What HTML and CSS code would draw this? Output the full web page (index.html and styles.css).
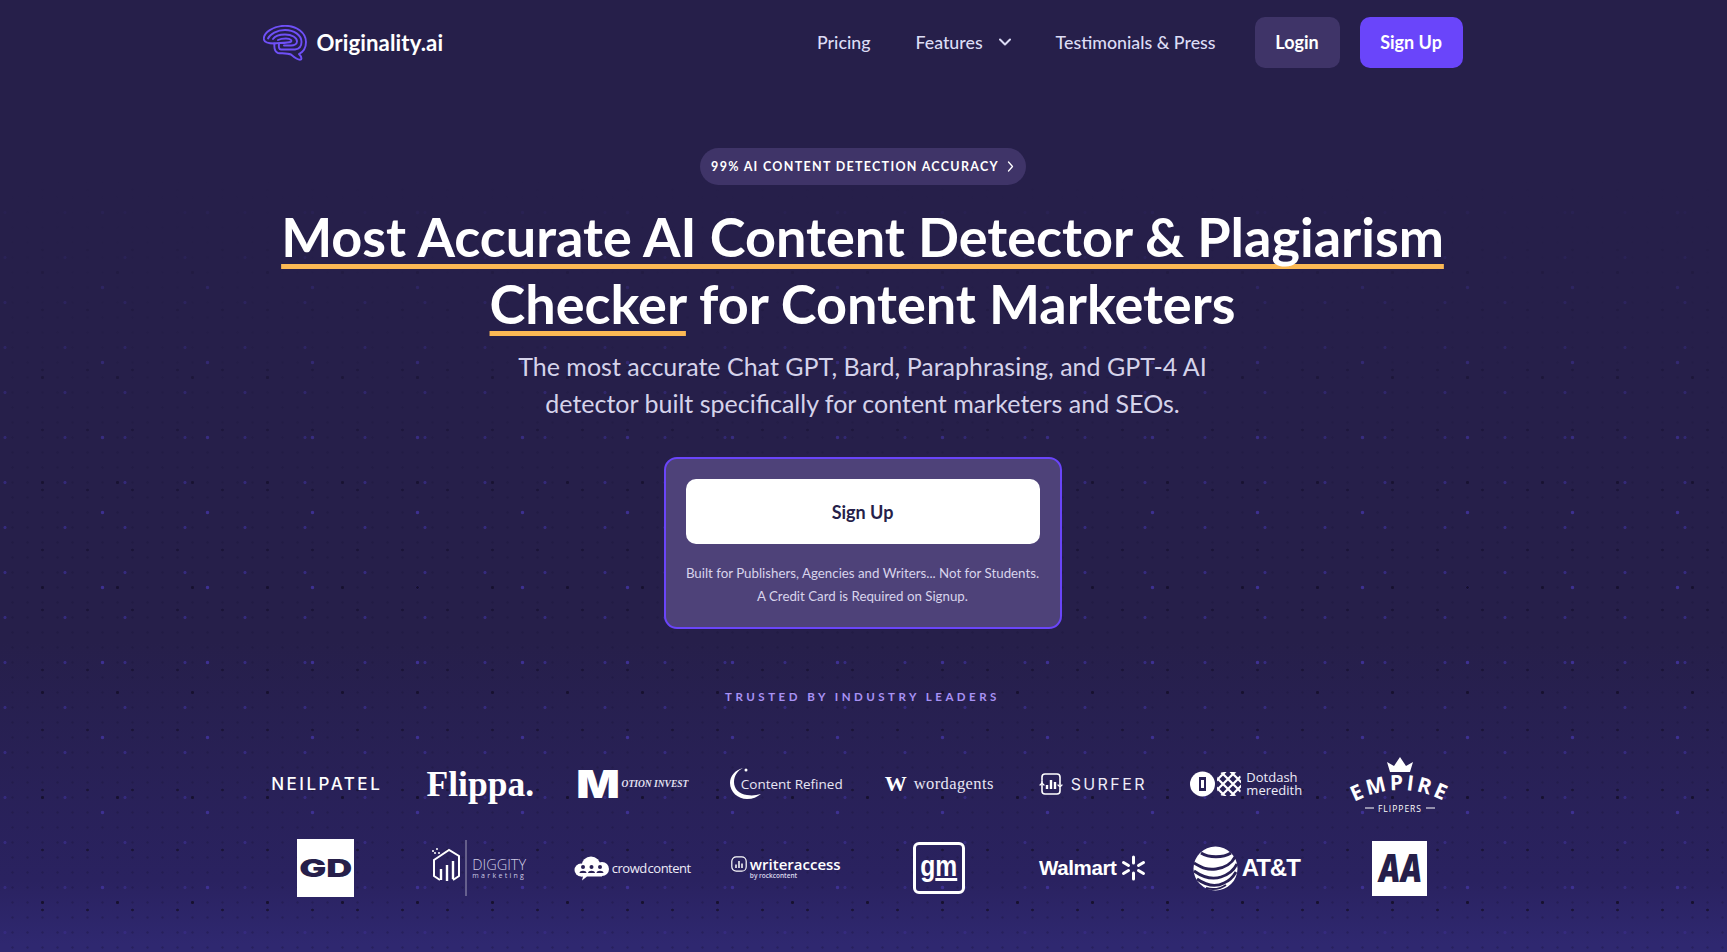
FILE: index.html
```html
<!DOCTYPE html>
<html lang="en">
<head>
    <meta charset="UTF-8">
    <meta name="viewport" content="width=device-width, initial-scale=1.0">
    <title>Originality.ai</title>
    <link rel="stylesheet" href="styles.css">
</head>
<body>
<header class="nav">
    <a class="brand" href="#">
        <svg class="brand-icon" width="44" height="36" viewBox="0 0 44 36" fill="none" stroke="#6f50f8" stroke-width="1.900" stroke-linecap="round" stroke-linejoin="round">
            <path d="M36 29C38 31 39 33 38 34.500C36 35.500 32 33 28 29.500C24 28 19 28.500 15 28C12 27 11 23 11.500 18.500C7 18.500 1 18 .8 14C.5 8 10 .8 22 .8C34 .8 43 8 43 17C43 23 40 27 36 29Z"/>
            <path d="M5 13.500C7 9 14 5 22 5C31 5 38.500 10 38.500 17C38.500 21 36 24 32 24.500L18 24.500C16 24.500 15.500 22 16 19"/>
            <path d="M10 14C12 11 17 9.500 22 9.500C29 9.500 34 12.500 34 16.500C34 19 31 20.500 28 20.500L21 20.500"/>
            <path d="M11 18.500C14 18 25 18 27.500 17C29.500 16 28 13.500 23 13.500C20 13.500 17 14 15 15"/>
        </svg>
        <span class="brand-name">Originality.ai</span>
    </a>
    <nav class="nav-links">
        <a href="#">Pricing</a>
        <a href="#" class="has-menu">Features
            <svg width="12" height="8" viewBox="0 0 12 8" fill="none" stroke="#dcdcf5" stroke-width="2" stroke-linecap="round" stroke-linejoin="round"><path d="M1 1.500l5 5 5-5"/></svg>
        </a>
        <a href="#">Testimonials &amp; Press</a>
    </nav>
    <div class="nav-buttons">
        <a href="#" class="btn btn-login">Login</a>
        <a href="#" class="btn btn-signup">Sign Up</a>
    </div>
</header>

<main class="hero">
    <a href="#" class="pill">99% AI CONTENT DETECTION ACCURACY
        <svg width="7" height="11" viewBox="0 0 7 11" fill="none" stroke="#fff" stroke-width="1.300" stroke-linecap="round" stroke-linejoin="round"><path d="M1.500 1l4 4.500-4 4.500"/></svg>
    </a>
    <h1><span class="mark">Most Accurate AI Content Detector &amp; Plagiarism Checker</span> for Content Marketers</h1>
    <p class="lead">The most accurate Chat GPT, Bard, Paraphrasing, and GPT-4 AI<br>detector built specifically for content marketers and SEOs.</p>

    <div class="signup-card">
        <a href="#" class="btn-white">Sign Up</a>
        <p>Built for Publishers, Agencies and Writers... Not for Students.<br>A Credit Card is Required on Signup.</p>
    </div>

    <div class="trusted">TRUSTED BY INDUSTRY LEADERS</div>

    <section class="logos">
        <div class="logo"><span class="l-neil">NEILPATEL</span></div>
        <div class="logo"><span class="l-flippa">Flippa.</span></div>
        <div class="logo l-motion"><b>M</b><span>OTION INVEST</span></div>
        <div class="logo l-refined">
            <svg width="44" height="34" viewBox="0 0 44 34" fill="#fff"><path d="M14 1C6 3 1 9 1 16c0 9 8 16 17 16 6 0 10-2 14-5-5 1-8 2-14 1C10 27 5 22 5 15 5 9 8 4 14 1Z"/><circle cx="17" cy="3" r="1.500"/></svg>
            <span>Content Refined</span>
        </div>
        <div class="logo l-wordagents"><b>W</b><span>wordagents</span></div>
        <div class="logo l-surfer">
            <svg width="24" height="24" viewBox="0 0 24 24" fill="none" stroke="#fff" stroke-width="1.600" stroke-linecap="round"><path d="M3 8V5a3 3 0 0 1 3-3h12a3 3 0 0 1 3 3v10"/><path d="M21 16v3a3 3 0 0 1-3 3H6a3 3 0 0 1-3-3V9"/><path d="M1 13l2-2 2 2M19 13l2 2 2-2" stroke-width="1.200"/><path d="M8 17v-4M12 17V8M16 17v-7" stroke-width="2.400" stroke-linecap="butt"/></svg>
            <span>SURFER</span>
        </div>
        <div class="logo l-dotdash">
            <svg width="52" height="26" viewBox="0 0 52 26">
                <defs><clipPath id="knot"><rect x="27" y="1" width="24" height="24" rx="7"/></clipPath></defs>
                <circle cx="12.500" cy="13" r="12.500" fill="#fff"/>
                <path d="M9 6h7v14H9z" fill="#282054"/>
                <path d="M11 9h3v8h-3z" fill="#fff"/>
                <g clip-path="url(#knot)" stroke="#fff" stroke-width="2.200">
                    <path d="M19 9l24 24M24 4l24 24M29-1l24 24M34-6l24 24M43-7L19 17M48-2L24 22M53 3L29 27M58 8L34 32"/>
                </g>
            </svg>
            <span>Dotdash<br>meredith</span>
        </div>
        <div class="logo">
            <svg width="106" height="58" viewBox="0 0 106 58">
                <path d="M43 17l-3-10 7 4 6-9 6 9 7-4-3 10z" fill="#fff"/>
                <path id="empire-arc" d="M0 51Q53 19 106 51" fill="none"/>
                <text class="empire-word"><textPath href="#empire-arc" startOffset="50%" text-anchor="middle">EMPIRE</textPath></text>
                <path d="M18 53h9M79 53h9" stroke="#fff"/>
                <text class="empire-sub" x="53" y="57" text-anchor="middle">FLIPPERS</text>
            </svg>
        </div>

        <div class="logo"><div class="white-box l-gd"><span>GD</span></div></div>
        <div class="logo l-diggity">
            <svg width="36" height="58" viewBox="0 0 36 58" fill="none" stroke="#fff" stroke-width="2">
                <path d="M9 17l9-6 10 6v20l-6 4M9 41l-6-4V21l6-4"/>
                <path d="M10 41V30M16 42V26M22 40V22" stroke-width="2.400"/>
                <path d="M1 12h2M5 10h2M3 14h2M7 14h2" stroke-width="1.400"/>
                <path d="M35 1v56" stroke-width=".8" stroke-opacity=".7"/>
            </svg>
            <div><span class="dig-name">DIGGITY</span><span class="dig-sub">marketing</span></div>
        </div>
        <div class="logo l-crowd">
            <svg width="35" height="25" viewBox="0 0 35 25">
                <g fill="#fff">
                    <circle cx="7" cy="14" r="6.500"/>
                    <circle cx="17" cy="10" r="9.500"/>
                    <circle cx="28" cy="13" r="7"/>
                    <path d="M7 15h21v5.500H13L8 24.500l1-4H7z"/>
                </g>
                <g fill="#282054"><circle cx="9" cy="11" r="2"/><path d="M5.500 17c0-3 7-3 7 0z"/><circle cx="17.500" cy="11" r="2"/><path d="M14 17c0-3 7-3 7 0z"/><circle cx="26" cy="11" r="2"/><path d="M22.500 17c0-3 7-3 7 0z"/></g>
            </svg>
            <span>crowd content</span>
        </div>
        <div class="logo l-writer">
            <svg width="16" height="16" viewBox="0 0 16 16" fill="none" stroke="#fff" stroke-width="1.200"><rect x=".8" y=".8" width="14.400" height="14.400" rx="4.500"/><path d="M5 12V8.500M8 12V5M11 12V7.500" stroke-width="1.500"/></svg>
            <div><span class="writer-name">writeraccess</span><span class="writer-sub">by rockcontent</span></div>
        </div>
        <div class="logo l-gm"><span class="gm-letters"><span>g<u>m</u></span></span></div>
        <div class="logo l-walmart">
            <span>Walmart</span>
            <svg width="25" height="26" viewBox="0 0 25 26" stroke="#fff" stroke-width="3" stroke-linecap="round"><path d="M12.500 2v6M12.500 18v6M2.500 7.500l5 3M22.500 7.500l-5 3M2.500 18.500l5-3M22.500 18.500l-5-3"/></svg>
        </div>
        <div class="logo l-att">
            <svg width="45" height="45" viewBox="0 0 45 45">
                <circle cx="22.500" cy="22.500" r="22" fill="#fff"/>
                <g fill="none" stroke="#282054" stroke-width="2.800">
                    <path d="M8 7c8 5 22 5 30 0"/>
                    <path d="M1 17c9 5 12 7 22 6 9-1 16-6 19-12"/>
                    <path d="M1 25c10 7 18 9 27 6 7-2 13-7 16-13"/>
                    <path d="M4 33c10 7 19 8 27 4 5-2 9-6 12-11"/>
                    <path d="M13 42c7 2 14 1 20-3" stroke-width="2"/>
                </g>
            </svg>
            <span>AT&amp;T</span>
        </div>
        <div class="logo"><div class="white-box l-aa"><span>AA</span></div></div>
    </section>
</main>
</body>
</html>
```

FILE: styles.css
```css
* {
    box-sizing: border-box;
}
html, body {
    height: 100%;
}
body {
    margin: 0;
    padding-right: 2px;
    overflow: hidden;
    font-family: Lato, "Open Sans", sans-serif;
    color: #fff;
    background-color: #261f4a;
    background-image:
        linear-gradient(to bottom, #261f4a 170px, rgba(38,31,74,0) 520px),
        radial-gradient(circle, #17112f 1.200px, transparent 1.900px),
        radial-gradient(circle, #1b1538 1px, transparent 1.700px),
        radial-gradient(circle, #3d3092 1.300px, transparent 2.100px),
        radial-gradient(circle, #352a7e 1.200px, transparent 1.900px),
        radial-gradient(circle, rgba(24,18,54,.3) .9px, transparent 1.500px),
        linear-gradient(to bottom, rgba(42,34,96,0) 640px, rgba(42,34,96,1) 880px, rgba(47,40,112,1) 945px);
    background-size: auto, 75px 105px, 45px 60px, 105px 75px, 60px 45px, 15px 15px, auto;
    background-position: 0 0, 5px 10px, 20px 40px, 50px 25px, 35px 10px, 5px 10px, 0 0;
}
a {
    color: inherit;
    text-decoration: none;
}

/* header */
.nav {
    width: 1200px;
    margin: 0 auto;
    padding-top: 17px;
    display: flex;
    align-items: center;
}
.brand {
    display: flex;
    align-items: center;
    gap: 10px;
}
.brand-name {
    font-size: 22.200px;
    font-weight: 700;
    letter-spacing: .1px;
}
.nav-links {
    margin-left: auto;
    padding-bottom: 2px;
    display: flex;
    align-items: center;
    gap: 45px;
    font-size: 17.800px;
    font-weight: 500;
    color: #dcdcf5;
}
.has-menu {
    display: flex;
    align-items: center;
    gap: 16px;
}
.nav-buttons {
    margin-left: 39px;
    display: flex;
    gap: 20px;
}
.btn {
    height: 51px;
    padding-bottom: 2px;
    display: flex;
    align-items: center;
    justify-content: center;
    border-radius: 10px;
    font-size: 18px;
    font-weight: 700;
}
.btn-login {
    width: 85px;
    background: #3f3468;
}
.btn-signup {
    width: 103px;
    background: #6a45fa;
}

/* hero */
.hero {
    display: flex;
    flex-direction: column;
    align-items: center;
}
.pill {
    margin-top: 80px;
    width: 326px;
    height: 37px;
    display: flex;
    align-items: center;
    justify-content: center;
    gap: 8px;
    border-radius: 19px;
    background: #3f3468;
    font-size: 12.500px;
    font-weight: 700;
    letter-spacing: 1.300px;
}
h1 {
    margin: 18px 0 0;
    width: 1240px;
    text-align: center;
    font-size: 54px;
    line-height: 67px;
    font-weight: 700;
}
.mark {
    text-decoration: underline #fbb854 5px;
    text-decoration-skip-ink: none;
    text-underline-offset: 7px;
}
.lead {
    margin: 11px 0 0;
    text-align: center;
    font-size: 25px;
    line-height: 37px;
    color: #d5d3ea;
}
.signup-card {
    margin-top: 35px;
    width: 398px;
    height: 172px;
    padding: 20px;
    background: #4e4279;
    border: 2px solid #6a45fa;
    border-radius: 13px;
    text-align: center;
}
.btn-white {
    display: flex;
    align-items: center;
    justify-content: center;
    height: 65px;
    background: #fff;
    border-radius: 10px;
    color: #261f4a;
    font-size: 18px;
    font-weight: 700;
}
.signup-card p {
    margin: 18px 0 0;
    font-size: 13.300px;
    line-height: 22.500px;
    white-space: nowrap;
    color: #d8d4ec;
}
.trusted {
    margin-top: 58px;
    height: 20px;
    line-height: 20px;
    font-size: 11.500px;
    font-weight: 700;
    letter-spacing: 3.500px;
    color: #a892f5;
}

/* logos */
.logos {
    margin-top: 35px;
    width: 1228px;
    display: grid;
    grid-template-columns: repeat(8, 1fr);
    grid-auto-rows: 84px;
}
.logo {
    display: flex;
    align-items: center;
    justify-content: center;
    gap: 5px;
    white-space: nowrap;
}
.l-neil {
    margin-left: 3px;
    font-family: Inter, sans-serif;
    font-size: 17px;
    font-weight: 500;
    letter-spacing: 2.500px;
}
.l-flippa {
    margin-left: 3px;
    font-family: "Liberation Serif", serif;
    font-size: 35.500px;
    font-weight: 700;
}
.l-motion {
    gap: 5px;
}
.l-motion b {
    margin-left: 4px;
    font-family: Inter, sans-serif;
    font-size: 38px;
    font-weight: 900;
    line-height: 38px;
    transform: scaleX(1.200);
}
.l-motion span {
    font-family: "Liberation Serif", serif;
    font-size: 9.500px;
    font-weight: 700;
    font-style: italic;
    color: #e4e2f2;
}
.l-refined {
    gap: 0;
}
.l-refined svg {
    margin-right: -32px;
}
.l-refined span {
    font-family: "Open Sans", sans-serif;
    font-size: 13.500px;
    color: #e8e6f4;
}
.l-wordagents {
    gap: 7px;
}
.l-wordagents b {
    font-family: "Liberation Serif", serif;
    font-size: 22px;
    font-weight: 700;
}
.l-wordagents span {
    font-family: "Liberation Serif", serif;
    font-size: 16.500px;
    letter-spacing: .4px;
    color: #e8e6f4;
}
.l-surfer {
    gap: 8px;
}
.l-surfer span {
    font-family: Inter, sans-serif;
    font-size: 16px;
    letter-spacing: 2.400px;
    color: #eeecf8;
}
.l-dotdash {
    gap: 4px;
}
.l-dotdash span {
    font-family: "Open Sans", sans-serif;
    font-size: 13px;
    line-height: 13px;
    color: #eeecf8;
}
.empire-word {
    font-family: "Open Sans", sans-serif;
    font-size: 21px;
    font-weight: 700;
    letter-spacing: 3px;
    fill: #fff;
}
.empire-sub {
    font-family: "Open Sans", sans-serif;
    font-size: 8.500px;
    letter-spacing: 1px;
    fill: #fff;
}
.white-box {
    display: flex;
    align-items: center;
    justify-content: center;
    background: #fff;
    color: #261f4a;
}
.l-gd {
    width: 57px;
    height: 58px;
    font-family: Inter, sans-serif;
    font-size: 24px;
    font-weight: 900;
}
.l-gd span {
    transform: scaleX(1.500);
}
.l-aa {
    width: 55px;
    height: 55px;
    font-family: Inter, sans-serif;
    font-size: 38px;
    font-weight: 900;
    font-style: italic;
}
.l-aa span {
    letter-spacing: -2px;
    transform: scaleX(.75);
}
.l-diggity {
    gap: 5px;
}
.l-diggity div, .l-writer div {
    display: flex;
    flex-direction: column;
}
.dig-name {
    font-family: "Open Sans", sans-serif;
    font-size: 14.500px;
    line-height: 15px;
    font-weight: 300;
    color: #cfcde4;
}
.dig-sub {
    font-family: "Open Sans", sans-serif;
    font-size: 7px;
    line-height: 8px;
    letter-spacing: 2.300px;
    color: #cfcde4;
}
.l-crowd {
    gap: 3px;
}
.l-crowd span {
    font-family: "Open Sans", sans-serif;
    font-size: 13px;
    letter-spacing: -.5px;
    word-spacing: -2px;
    color: #eeecf8;
}
.l-writer {
    align-items: flex-start;
    padding-top: 30px;
    gap: 3px;
}
.writer-name {
    font-family: "Open Sans", sans-serif;
    font-size: 15px;
    line-height: 16px;
    font-weight: 600;
}
.writer-sub {
    font-family: "Open Sans", sans-serif;
    font-size: 6.500px;
    line-height: 8px;
    font-weight: 600;
    color: #dddbee;
}
.gm-letters {
    width: 52px;
    height: 52px;
    display: flex;
    align-items: center;
    justify-content: center;
    padding-bottom: 5px;
    border: 3px solid #fff;
    border-radius: 6px;
    font-family: "Liberation Sans", sans-serif;
    font-size: 29px;
    line-height: 30px;
    font-weight: 700;
}
.gm-letters span {
    transform: scaleX(.85);
}
.gm-letters u {
    text-decoration: underline 3px;
    text-decoration-skip-ink: none;
    text-underline-offset: 2px;
}
.l-walmart {
    gap: 5px;
}
.l-walmart span {
    font-family: "Liberation Sans", sans-serif;
    font-size: 20.500px;
    font-weight: 700;
    letter-spacing: -.4px;
}
.l-att {
    gap: 4px;
}
.l-att span {
    font-family: "Liberation Sans", sans-serif;
    font-size: 24px;
    font-weight: 700;
    letter-spacing: -1px;
}
```
